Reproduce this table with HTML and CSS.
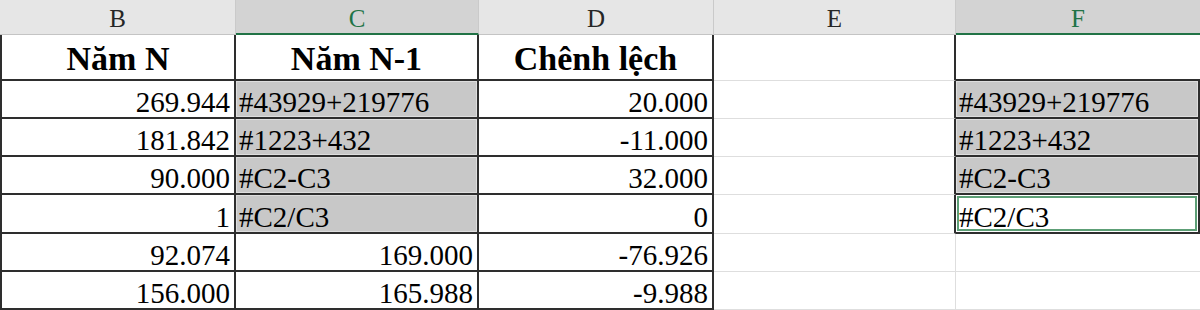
FILE: index.html
```html
<!DOCTYPE html>
<html lang="vi">
<head>
<meta charset="utf-8">
<title>Sheet</title>
<link rel="stylesheet" href="styles.css">
</head>
<body>
<div class="sheet">
  <div class="hd">B</div>
  <div class="hd sel">C</div>
  <div class="hd">D</div>
  <div class="hd">E</div>
  <div class="hd sel last">F</div>

  <div class="c t first title">Năm N</div>
  <div class="c t title">Năm N-1</div>
  <div class="c t title">Chênh lệch</div>
  <div class="c e boxl"></div>
  <div class="c f ftop"></div>

  <div class="c t first num">269.944</div>
  <div class="c t fill txt">#43929+219776</div>
  <div class="c t num">20.000</div>
  <div class="c e boxl"></div>
  <div class="c f box fill txt">#43929+219776</div>

  <div class="c t first num">181.842</div>
  <div class="c t fill txt">#1223+432</div>
  <div class="c t num">-11.000</div>
  <div class="c e boxl"></div>
  <div class="c f box fill txt">#1223+432</div>

  <div class="c t first num">90.000</div>
  <div class="c t fill txt">#C2-C3</div>
  <div class="c t num">32.000</div>
  <div class="c e boxl"></div>
  <div class="c f box fill txt">#C2-C3</div>

  <div class="c t first num">1</div>
  <div class="c t fill txt">#C2/C3</div>
  <div class="c t num">0</div>
  <div class="c e boxl"></div>
  <div class="c f box active txt">#C2/C3</div>

  <div class="c t first num">92.074</div>
  <div class="c t num">169.000</div>
  <div class="c t num">-76.926</div>
  <div class="c e"></div>
  <div class="c f"></div>

  <div class="c t first num">156.000</div>
  <div class="c t num">165.988</div>
  <div class="c t num">-9.988</div>
  <div class="c e"></div>
  <div class="c f"></div>
</div>
</body>
</html>
```
FILE: styles.css
```css
html, body {
  margin: 0;
  padding: 0;
  background: #ffffff;
}

.sheet {
  display: grid;
  grid-template-columns: 236px 243px 235px 242px 244px;
  grid-template-rows: 35px 46px 38px 38px 38px 39px 38px 38px;
  width: 1200px;
  height: 310px;
  overflow: hidden;
  font-family: "Liberation Serif", "Times New Roman", serif;
  color: #000;
}

.hd {
  box-sizing: border-box;
  background: #e6e6e6;
  border-right: 1px solid #cacaca;
  border-bottom: 1px solid #c4c4c4;
  display: flex;
  align-items: flex-end;
  justify-content: center;
  font-size: 25px;
  line-height: 28px;
  padding-bottom: 1px;
  color: #262626;
}

.hd.sel {
  background: #d3d3d3;
  color: #217346;
  border-bottom: 2px solid #217346;
  padding-bottom: 0;
}

.hd.last {
  border-right: none;
}

.c {
  box-sizing: border-box;
  display: flex;
  align-items: flex-end;
  font-size: 29px;
  line-height: 30px;
  white-space: nowrap;
  overflow: hidden;
}

.t {
  border-right: 2px solid #2e2e2e;
  border-bottom: 2px solid #2e2e2e;
}

.first {
  border-left: 2px solid #2e2e2e;
}

.title {
  justify-content: center;
  font-weight: bold;
  font-size: 34px;
  line-height: 38px;
  padding-bottom: 1px;
}

.num {
  justify-content: flex-end;
  padding-right: 4px;
}

.txt {
  justify-content: flex-start;
  padding-left: 3px;
}

.fill {
  background: #c8c8c8;
  box-shadow: inset 0 0 0 1px #dedede;
}

.e {
  border-right: 1px solid #dedede;
  border-bottom: 1px solid #dedede;
}

.e.boxl {
  border-right: 2px solid #2e2e2e;
}

.f {
  border-bottom: 1px solid #dedede;
}

.f.ftop {
  border-bottom: 2px solid #2e2e2e;
}

.f.box {
  border-right: 2px solid #2e2e2e;
  border-bottom: 2px solid #2e2e2e;
}

.f.active {
  background: #ffffff;
  box-shadow: inset 0 0 0 1px #ffffff, inset 0 0 0 3px #5d9f76;
}
```
